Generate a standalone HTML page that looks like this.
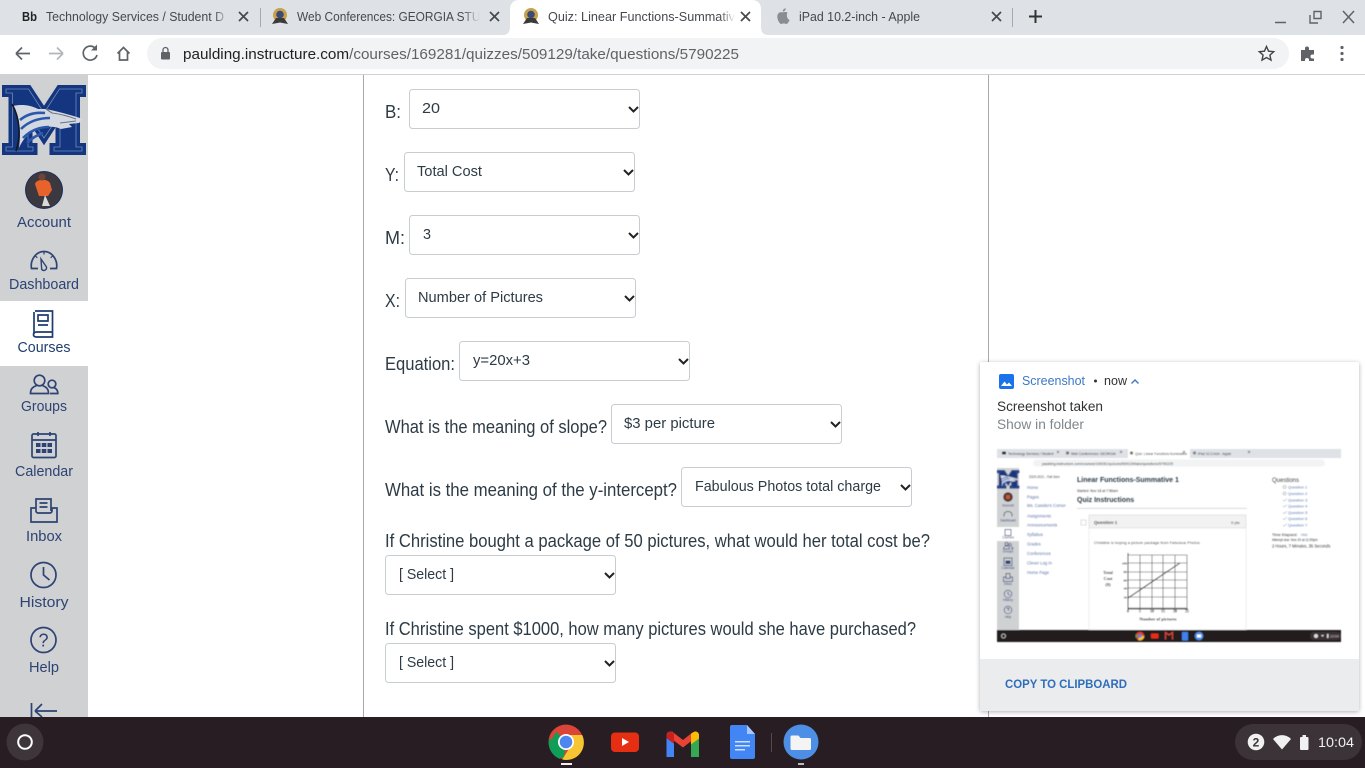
<!DOCTYPE html>
<html lang="en">
<head>
<meta charset="utf-8">
<title>Quiz: Linear Functions-Summative 1</title>
<style>
html,body{margin:0;padding:0;width:1365px;height:768px;overflow:hidden;background:#fff}
svg{display:block;position:absolute;left:0;top:0}
text{font-family:"Liberation Sans",sans-serif}
.q{font-size:18px;fill:#2d3b45}
.s{font-size:15px;fill:#2d3b45}
.n{font-size:15px;fill:#2d4373;text-anchor:middle}
.t{font-size:12.5px;fill:#45494e}
.box{fill:#fff;stroke:#c7cdd1;stroke-width:1}
.chev{fill:none;stroke:#222;stroke-width:2}
.ic{fill:none;stroke:#2d4373;stroke-width:1.7}
.x{fill:none;stroke:#45494e;stroke-width:1.7}
.tb{fill:none;stroke:#5f6368;stroke-width:1.7}
.mi{fill:none;stroke:#2d4373;stroke-width:.7}
.ml{font-size:3.2px;fill:#2d4373;text-anchor:middle}
.sf{font-family:"Liberation Serif",serif;font-weight:bold;fill:#222}
</style>
</head>
<body>
<svg width="1365" height="768" viewBox="0 0 1365 768" xmlns="http://www.w3.org/2000/svg">
<defs>
<linearGradient id="fg" x1="0" x2="1" y1="0" y2="0"><stop offset="0" stop-color="#dee1e6" stop-opacity="0"/><stop offset="1" stop-color="#dee1e6"/></linearGradient>
<linearGradient id="fw" x1="0" x2="1" y1="0" y2="0"><stop offset="0" stop-color="#fff" stop-opacity="0"/><stop offset="1" stop-color="#fff"/></linearGradient>
<filter id="sh" x="-10%" y="-10%" width="120%" height="120%"><feDropShadow dx="0" dy="1" stdDeviation="2.5" flood-color="#000" flood-opacity=".3"/></filter>
<filter id="bl"><feGaussianBlur stdDeviation=".4"/></filter>
<clipPath id="cc"><circle cx="44" cy="190" r="18"/></clipPath>
</defs>

<!-- browser chrome -->
<rect width="1365" height="35" fill="#dee1e6"/>
<rect y="35" width="1365" height="39" fill="#fff"/>
<rect y="74" width="1365" height="1" fill="#d0d1d3"/>
<path d="M502 35c6 0 8-3 8-8V9c0-5 3-9 9-9h233c6 0 9 4 9 9v18c0 5 2 8 8 8z" fill="#fff"/>

<!-- tab 1 -->
<text x="22" y="21" style="font-size:13px;font-weight:bold" fill="#222" textLength="15" lengthAdjust="spacingAndGlyphs">Bb</text>
<text x="46" y="21" class="t" textLength="178" lengthAdjust="spacingAndGlyphs">Technology Services / Student D</text>
<rect x="214" y="6" width="15" height="24" fill="url(#fg)"/><rect x="229" y="6" width="24" height="24" fill="#dee1e6"/>
<path class="x" d="M239 12l9 9M248 12l-9 9"/>
<rect x="260" y="8" width="1" height="19" fill="#a4a7ab"/>
<!-- tab 2 -->
<g id="seal"><circle cx="280" cy="15" r="7" fill="#c8a24a"/><circle cx="280" cy="14.5" r="3.8" fill="#3c4a78"/><path d="M272 24l4-6h8l4 6-8-1.500z" fill="#3a3a3a"/></g>
<text x="297" y="21" class="t" textLength="192" lengthAdjust="spacingAndGlyphs">Web Conferences: GEORGIA STUD</text>
<rect x="462" y="6" width="18" height="24" fill="url(#fg)"/><rect x="480" y="6" width="24" height="24" fill="#dee1e6"/>
<path class="x" d="M490 12l9 9M499 12l-9 9"/>
<!-- tab 3 -->
<use href="#seal" x="251"/>
<text x="548" y="21" class="t" textLength="187" lengthAdjust="spacingAndGlyphs">Quiz: Linear Functions-Summativ</text>
<rect x="720" y="6" width="15" height="24" fill="url(#fw)"/><rect x="735" y="6" width="21" height="24" fill="#fff"/>
<path class="x" d="M741 12l9 9M750 12l-9 9"/>
<!-- tab 4 -->
<g transform="translate(3.500 2)"><path d="M784 10.500c-1.500-.8-3.800-.6-4.800 0-2.200-1.200-5.400.4-5.400 4.100 0 3.500 2.400 7.400 4.100 7.400.9 0 1.200-.6 2.400-.6s1.500.6 2.400.6c1.300 0 2.800-2.200 3.300-4-2.800-1.100-3.200-5.600-2-7.500zM779.200 9.500c0-1.800 1.300-3 3-3.300.2 1.800-1.300 3.300-3 3.300z" fill="#8a8d91"/></g>
<text x="799" y="21" class="t" textLength="121" lengthAdjust="spacingAndGlyphs">iPad 10.2-inch - Apple</text>
<path class="x" d="M992 12l9 9M1001 12l-9 9"/>
<rect x="1012" y="8" width="1" height="19" fill="#a4a7ab"/>
<path d="M1035.500 10v13M1029 16.500h13" fill="none" stroke="#333" stroke-width="2"/>
<!-- window controls -->
<path d="M1275 22.500h11" stroke="#5f6368" stroke-width="1.500"/>
<path d="M1310 15v8h8M1314 11.500h7v7h-7z" fill="none" stroke="#5f6368" stroke-width="1.400"/>
<path d="M1343 11l11 12M1354 11l-11 12" fill="none" stroke="#5f6368" stroke-width="1.500"/>

<!-- toolbar -->
<path d="M16 53.500h14M16 53.500l6-6M16 53.500l6 6" class="tb"/>
<path d="M63 53.500H49M63 53.500l-6-6M63 53.500l-6 6" fill="none" stroke="#b4b6b9" stroke-width="1.700"/>
<path d="M95.500 48.500a7 7 0 1 0 1.500 6.500" class="tb"/><path d="M97 44.500v6h-6z" fill="#5f6368"/>
<path d="M117.500 53.500l6-6 6 6M119.500 52v8h8v-8" class="tb"/>
<rect x="147" y="38" width="1142" height="31" rx="15.500" fill="#f1f3f4"/>
<rect x="161" y="52" width="9" height="7.500" rx="1" fill="#5f6368"/><path d="M163 52v-2a2.500 2.500 0 0 1 5 0v2" fill="none" stroke="#5f6368" stroke-width="1.300"/>
<text x="183" y="59" style="font-size:14.500px" textLength="556" lengthAdjust="spacingAndGlyphs"><tspan fill="#202124">paulding.instructure.com</tspan><tspan fill="#5f6368">/courses/169281/quizzes/509129/take/questions/5790225</tspan></text>
<path d="M1266.500 46.500l2.100 4.700 5.100.5-3.800 3.400 1.100 5-4.500-2.600-4.500 2.600 1.100-5-3.800-3.400 5.100-.5z" fill="none" stroke="#444" stroke-width="1.400"/>
<path d="M1301 50h4v-1.500a2 2 0 0 1 4 0V50h5v4.500h-1.500a2 2 0 0 0 0 4h1.500V61h-5v-1a2 2 0 0 0-4 0v1h-4z" fill="#5f6368"/>
<circle cx="1342" cy="47.500" r="1.600" fill="#5f6368"/><circle cx="1342" cy="53.500" r="1.600" fill="#5f6368"/><circle cx="1342" cy="59.500" r="1.600" fill="#5f6368"/>

<!-- sidebar -->
<rect y="75" width="88" height="642" fill="#cfd1d3"/>
<rect y="301" width="88" height="65" fill="#fff"/>

<!-- logo -->
<g id="logo">
<path d="M3.500 86.500h26l14.500 22 14.500-22h26v9h-6v49h6v9H51v-9h6v-22l-13 20-13-20v22h5v9H3.500v-9h6.500v-49H3.500z" fill="#14357f" stroke="#14357f" stroke-width="3"/>
<path d="M6 89h22.500l15.500 24 15.500-24H82v4h-6v54h6v4H54v-4h6v-33l-16 24-16-24v33h5v4H6v-4h6.500V93H6z" fill="#14357f" stroke="#6f8bb8" stroke-width=".8"/>
<path d="M13 106c9-2 17-1 25 3l8 0c10 2 25 6 37 10l-4 4-10 1 3 3-11 2c-9-4-20-3-29 3-6 4-10 9-13 16 2-14 1-30-6-42z" fill="#d3d8e1"/>
<path d="M12 104c8 14 9 32 4 47" fill="none" stroke="#15171f" stroke-width="1.600"/>
<path d="M21 129c8-8 18-11 29-11M23 138c7-7 16-11 26-11M20 120c7-6 15-8 25-7M27 143c5-5 10-8 16-10" fill="none" stroke="#2a58ad" stroke-width="2.600"/>
<path d="M52 113c8 1 16 3 24 6M60 123l16-2M46 109l6 4" fill="none" stroke="#6b7484" stroke-width="1.100"/>
</g>

<!-- avatar -->
<circle cx="44" cy="190" r="19" fill="#1c2f5c"/>
<g clip-path="url(#cc)"><rect x="25" y="171" width="38" height="38" fill="#3c3840"/><path d="M35 184c1-5 12-6 15-1l2 7-4 6h-9z" fill="#e8622c"/><circle cx="42" cy="177" r="3.500" fill="#6e4438"/><path d="M45 195l5 11h-8z" fill="#d9d9d9"/></g>

<!-- nav icons -->
<path class="ic" d="M38 268.500h-6.500c-1.500-8 4-17 12.500-17s14 9 12.500 17H50"/>
<path class="ic" style="stroke-width:1.400" d="M41 259l5.500 8a2.800 2.800 0 0 1-4.800 2.500z"/>
<path d="M44 252v2.500M35.500 256l1.800 1.800M52.500 256l-1.800 1.800" stroke="#2d4373" stroke-width="1.200"/>
<path class="ic" d="M35 311h17.500v21H36.500c-2 0-3 1-3 2.500s1 2.500 3 2.500h16v-5M34 334V312" style="stroke:#1f3d70"/><path class="ic" d="M38 315h10v6H38zM38 325h10" style="stroke:#1f3d70"/>
<circle class="ic" cx="39.500" cy="380.500" r="5.300"/>
<path class="ic" d="M36.500 385.500c-3.500 1.500-6 3-6 8h18c0-5-2.500-6.500-6-8"/>
<circle class="ic" cx="52" cy="384" r="3.800"/>
<path class="ic" d="M50 393.500h7.800c0-4-2-5-4-6"/>
<rect class="ic" x="32" y="434" width="24" height="23.500" rx="1.500"/><path class="ic" d="M32 440h24M38 432v4M50 432v4"/>
<path d="M36 443h4.500v4H36zM41.800 443h4.500v4h-4.500zM47.500 443h4.500v4h-4.500zM36 449h4.500v4H36zM41.800 449h4.500v4h-4.500zM47.500 449h4.500v4h-4.500z" fill="#2d4373"/>
<path class="ic" d="M36 511v-12h15v12M39.500 503h8M39.500 507h8M31 508h5v3a2 2 0 0 0 2 2h12a2 2 0 0 0 2-2v-3h5v14H31z"/>
<circle class="ic" cx="43.500" cy="575" r="12.500"/><path class="ic" d="M43.500 567v8l6 5"/>
<circle class="ic" cx="43.500" cy="640" r="12.500"/>
<text x="43.500" y="646.500" style="font-size:18px;fill:#2d4373;text-anchor:middle">?</text>
<path class="ic" d="M31.500 703v14M57 711H35M35 711l7-7M35 711l7 6"/>

<text class="n" x="44" y="227" textLength="54" lengthAdjust="spacingAndGlyphs">Account</text>
<text class="n" x="44" y="289" textLength="70" lengthAdjust="spacingAndGlyphs">Dashboard</text>
<text class="n" x="44" y="352" textLength="53" lengthAdjust="spacingAndGlyphs" style="fill:#1f3d70">Courses</text>
<text class="n" x="44" y="411" textLength="46" lengthAdjust="spacingAndGlyphs">Groups</text>
<text class="n" x="44" y="476" textLength="58" lengthAdjust="spacingAndGlyphs">Calendar</text>
<text class="n" x="44" y="541" textLength="36" lengthAdjust="spacingAndGlyphs">Inbox</text>
<text class="n" x="44" y="607" textLength="49" lengthAdjust="spacingAndGlyphs">History</text>
<text class="n" x="44" y="672" textLength="30" lengthAdjust="spacingAndGlyphs">Help</text>

<!-- content borders -->
<rect x="363" y="75" width="1" height="642" fill="#a8a8a8"/>
<rect x="988" y="75" width="1" height="642" fill="#a8a8a8"/>

<!-- form -->
<text class="q" x="385" y="118" textLength="16" lengthAdjust="spacingAndGlyphs">B:</text>
<rect class="box" x="409.500" y="89.500" width="230" height="39" rx="3"/>
<text class="s" x="422" y="113" textLength="18" lengthAdjust="spacingAndGlyphs">20</text>
<path class="chev" d="M629 107l4.500 4.500 4.500-4.500"/>

<text class="q" x="385" y="181" textLength="14" lengthAdjust="spacingAndGlyphs">Y:</text>
<rect class="box" x="404.500" y="152.500" width="230" height="39" rx="3"/>
<text class="s" x="417" y="176" textLength="65" lengthAdjust="spacingAndGlyphs">Total Cost</text>
<path class="chev" d="M624 170l4.500 4.500 4.500-4.500"/>

<text class="q" x="385" y="244" textLength="20" lengthAdjust="spacingAndGlyphs">M:</text>
<rect class="box" x="409.500" y="215.500" width="230" height="39" rx="3"/>
<text class="s" x="423" y="239" textLength="8" lengthAdjust="spacingAndGlyphs">3</text>
<path class="chev" d="M629 233l4.500 4.500 4.500-4.500"/>

<text class="q" x="385" y="307" textLength="15" lengthAdjust="spacingAndGlyphs">X:</text>
<rect class="box" x="405.500" y="278.500" width="230" height="39" rx="3"/>
<text class="s" x="418" y="302" textLength="125" lengthAdjust="spacingAndGlyphs">Number of Pictures</text>
<path class="chev" d="M625 296l4.500 4.500 4.500-4.500"/>

<text class="q" x="385" y="370" textLength="70" lengthAdjust="spacingAndGlyphs">Equation:</text>
<rect class="box" x="459.500" y="341.500" width="230" height="39" rx="3"/>
<text class="s" x="473" y="365" textLength="57" lengthAdjust="spacingAndGlyphs">y=20x+3</text>
<path class="chev" d="M679 359l4.500 4.500 4.500-4.500"/>

<text class="q" x="385" y="433" textLength="222" lengthAdjust="spacingAndGlyphs">What is the meaning of slope?</text>
<rect class="box" x="611.500" y="404.500" width="230" height="39" rx="3"/>
<text class="s" x="624" y="428" textLength="91" lengthAdjust="spacingAndGlyphs">$3 per picture</text>
<path class="chev" d="M831 422l4.500 4.500 4.500-4.500"/>

<text class="q" x="385" y="496" textLength="292" lengthAdjust="spacingAndGlyphs">What is the meaning of the y-intercept?</text>
<rect class="box" x="681.500" y="467.500" width="230" height="39" rx="3"/>
<text class="s" x="695" y="491" textLength="186" lengthAdjust="spacingAndGlyphs">Fabulous Photos total charge</text>
<path class="chev" d="M901 485l4.500 4.500 4.500-4.500"/>

<text class="q" x="385" y="547" textLength="545" lengthAdjust="spacingAndGlyphs">If Christine bought a package of 50 pictures, what would her total cost be?</text>
<rect class="box" x="385.500" y="555.500" width="230" height="39" rx="3"/>
<text class="s" x="399" y="579" textLength="55" lengthAdjust="spacingAndGlyphs">[ Select ]</text>
<path class="chev" d="M605 573l4.500 4.500 4.500-4.500"/>

<text class="q" x="385" y="635" textLength="531" lengthAdjust="spacingAndGlyphs">If Christine spent $1000, how many pictures would she have purchased?</text>
<rect class="box" x="385.500" y="643.500" width="230" height="39" rx="3"/>
<text class="s" x="399" y="667" textLength="55" lengthAdjust="spacingAndGlyphs">[ Select ]</text>
<path class="chev" d="M605 661l4.500 4.500 4.500-4.500"/>

<!-- notification -->
<rect x="980" y="362" width="379" height="349" rx="2" fill="#fff" filter="url(#sh)"/>
<rect x="980" y="659" width="379" height="52" fill="#ebecee"/>
<rect x="999" y="374" width="15" height="15" rx="2" fill="#1a73e8"/>
<path d="M1001 386l3.500-4.500 2.500 3 2-2 3 3.500z" fill="#fff"/>
<text x="1022" y="385" style="font-size:12.500px" fill="#3c78c8" textLength="63" lengthAdjust="spacingAndGlyphs">Screenshot</text>
<circle cx="1095.500" cy="381" r="1.500" fill="#333"/>
<text x="1104" y="385" style="font-size:12.500px" fill="#333" textLength="23" lengthAdjust="spacingAndGlyphs">now</text>
<path d="M1131.500 383.500l3.500-3.500 3.500 3.500" fill="none" stroke="#3c78c8" stroke-width="1.400"/>
<text x="997" y="411" style="font-size:13.500px" fill="#333" textLength="106" lengthAdjust="spacingAndGlyphs">Screenshot taken</text>
<text x="997" y="429" style="font-size:13.500px" fill="#80868b" textLength="87" lengthAdjust="spacingAndGlyphs">Show in folder</text>
<text x="1005" y="688" style="font-size:12px;font-weight:bold" fill="#2f6dbb" textLength="122" lengthAdjust="spacingAndGlyphs">COPY TO CLIPBOARD</text>

<!-- thumbnail -->
<g>
<rect x="997" y="449" width="344" height="193" fill="#fff"/>
<g filter="url(#bl)">
<rect x="997" y="449" width="344" height="9" fill="#dee1e6"/>
<rect x="1128" y="449" width="62" height="9" fill="#fff"/>
<rect x="1002" y="451.500" width="4" height="3" fill="#333"/>
<rect x="1066" y="451.500" width="3" height="3" fill="#776"/>
<rect x="1130" y="451.500" width="3" height="3" fill="#776"/>
<rect x="1193" y="451.500" width="3" height="3" fill="#888"/>
<text x="1008" y="455" style="font-size:3.400px" fill="#333">Technology Services / Student</text>
<text x="1071" y="455" style="font-size:3.400px" fill="#333">Web Conferences: GEORGIA</text>
<text x="1135" y="455" style="font-size:3.400px" fill="#333">Quiz: Linear Functions-Summative</text>
<text x="1198" y="455" style="font-size:3.400px" fill="#333">iPad 10.2-inch - Apple</text>
<path d="M1057 451l2 2M1059 451l-2 2M1120 451l2 2M1122 451l-2 2M1183 451l2 2M1185 451l-2 2M1248 451l2 2M1250 451l-2 2" stroke="#444" stroke-width=".6"/>
<rect x="1033" y="459.500" width="292" height="7" rx="3.500" fill="#f1f3f4"/>
<text x="1042" y="465" style="font-size:3.600px" fill="#333">paulding.instructure.com/courses/169281/quizzes/509129/take/questions/5790225</text>
<rect x="997" y="468" width="22" height="162" fill="#cfd1d3"/>
<rect x="997" y="527" width="22" height="14" fill="#fff"/>
<g transform="translate(996.500 447.500) scale(.265)"><use href="#logo"/></g>
<circle cx="1008" cy="497" r="4.800" fill="#4e3438"/><path d="M1006 495h4v4h-4z" fill="#c9562c"/>
<path class="mi" d="M1004 516.500c-.5-3 1-5 4-5s4.500 2 4 5"/>
<path class="mi" d="M1005 529.500h6v6h-6z"/>
<circle class="mi" cx="1006.500" cy="544" r="1.500"/><path class="mi" d="M1003.500 549c0-2 1.500-3 3-3s3 1 3 3zM1010 543.500a1.300 1.300 0 1 0 .1 0M1011 549h2c0-1.500-1-2-2-2"/>
<rect class="mi" x="1004" y="558" width="8" height="7.500"/><path d="M1005.500 560.500h5v3.500h-5z" fill="#2d4373"/>
<path class="mi" d="M1003.500 577h2.500v1.500h4V577h2.500v4.500h-9zM1006 577v-3.500h4v3.500"/>
<circle class="mi" cx="1008" cy="594" r="3.800"/><path class="mi" d="M1008 591.500v2.500l2 1.500"/>
<circle class="mi" cx="1008" cy="610" r="3.800"/><path class="mi" d="M1007 609c0-1.500 2-1.500 2 0 0 1-1 1-1 2"/>
<text class="ml" x="1008" y="506.500">Account</text>
<text class="ml" x="1008" y="521.500">Dashboard</text>
<text class="ml" x="1008" y="538.500">Courses</text>
<text class="ml" x="1008" y="552.500">Groups</text>
<text class="ml" x="1008" y="569">Calendar</text>
<text class="ml" x="1008" y="585">Inbox</text>
<text class="ml" x="1008" y="601">History</text>
<text class="ml" x="1008" y="618">Help</text>
<g style="font-size:4.200px" fill="#5e74a8">
<text x="1027" y="489">Home</text><text x="1027" y="498.500">Pages</text><text x="1027" y="507">Ms. Cassito's Corner</text><text x="1027" y="517.500">Assignments</text><text x="1027" y="526.500">Announcements</text><text x="1027" y="536">Syllabus</text><text x="1027" y="545.500">Grades</text><text x="1027" y="555">Conferences</text><text x="1027" y="564.500">Clever Log In</text><text x="1027" y="574">Home Page</text>
</g>
<text x="1029" y="478" style="font-size:3.200px" fill="#444">2020-2021 - Fall Sem</text>
<text x="1077" y="482" style="font-size:7px;font-weight:bold" fill="#2d3b45">Linear Functions-Summative 1</text>
<text x="1077" y="492" style="font-size:3.500px" fill="#333">Started: Nov 18 at 7:56am</text>
<text x="1077" y="502" style="font-size:7px;font-weight:bold" fill="#2d3b45">Quiz Instructions</text>
<rect x="1077" y="508" width="170" height=".7" fill="#c7cdd1"/>
<rect x="1081" y="520" width="5" height="5" fill="#fff" stroke="#b8bcc0" stroke-width=".5"/>
<rect x="1089" y="515" width="157" height="13" fill="#f2f2f2" stroke="#d0d0d0" stroke-width=".5"/>
<rect x="1089" y="528" width="157" height="102" fill="#fff" stroke="#dcdcdc" stroke-width=".5"/>
<text x="1094" y="524" style="font-size:4.500px;font-weight:bold" fill="#333">Question 1</text>
<text x="1231" y="524" style="font-size:4px" fill="#333">9 pts</text>
<text x="1094" y="544" style="font-size:4px" fill="#333">Christine is buying a picture package from Fabulous Photos.</text>
<g fill="none" stroke="#444" stroke-width=".6"><path d="M1128 555h59v53h-59zM1140 555v53M1152 555v53M1163 555v53M1175 555v53M1128 563h59M1128 572h59M1128 580h59M1128 588h59M1128 597h59"/></g>
<path d="M1128 598l52-35" stroke="#222" stroke-width="1" fill="none"/>
<path d="M1128 553v56h60" stroke="#111" stroke-width="1" fill="none"/>
<g class="sf">
<text class="sf" x="1108" y="574" style="font-size:4.500px;text-anchor:middle">Total</text>
<text class="sf" x="1108" y="580" style="font-size:4.500px;text-anchor:middle">Cost</text>
<text class="sf" x="1108" y="586" style="font-size:4.500px;text-anchor:middle">($)</text>
<text class="sf" x="1158" y="620.500" style="font-size:4.500px;text-anchor:middle">Number of pictures</text>
<text class="sf" x="1128" y="612.500" style="font-size:3.800px;text-anchor:middle">0</text><text class="sf" x="1140" y="612.500" style="font-size:3.800px;text-anchor:middle">5</text><text class="sf" x="1152" y="612.500" style="font-size:3.800px;text-anchor:middle">10</text><text class="sf" x="1163" y="612.500" style="font-size:3.800px;text-anchor:middle">15</text><text class="sf" x="1175" y="612.500" style="font-size:3.800px;text-anchor:middle">20</text><text class="sf" x="1187" y="612.500" style="font-size:3.800px;text-anchor:middle">25</text>
<text class="sf" x="1127" y="564.500" style="font-size:3.500px;text-anchor:end">100</text><text class="sf" x="1127" y="573" style="font-size:3.500px;text-anchor:end">80</text><text class="sf" x="1127" y="581.500" style="font-size:3.500px;text-anchor:end">60</text><text class="sf" x="1127" y="589.500" style="font-size:3.500px;text-anchor:end">40</text><text class="sf" x="1127" y="598.500" style="font-size:3.500px;text-anchor:end">20</text>
</g>
<text x="1272" y="482" style="font-size:6px" fill="#444">Questions</text>
<g style="font-size:4px" fill="#5a78b8">
<text x="1288" y="488.500">Question 1</text><text x="1288" y="495">Question 2</text><text x="1288" y="501.500">Question 3</text><text x="1288" y="507.500">Question 4</text><text x="1288" y="514">Question 5</text><text x="1288" y="520">Question 6</text><text x="1288" y="526.500">Question 7</text>
</g>
<circle cx="1284.500" cy="487" r="1.500" fill="none" stroke="#888" stroke-width=".5"/><circle cx="1284.500" cy="493.500" r="1.500" fill="none" stroke="#888" stroke-width=".5"/>
<path d="M1283 500l1.200 1.200 2.500-2.500M1283 506l1.200 1.200 2.500-2.500M1283 512.500l1.200 1.200 2.500-2.500M1283 518.500l1.200 1.200 2.500-2.500M1283 525l1.200 1.200 2.500-2.500" fill="none" stroke="#7a8a9a" stroke-width=".5"/>
<text x="1272" y="536" style="font-size:4px" fill="#333">Time Elapsed:</text>
<text x="1301" y="536" style="font-size:3.200px" fill="#6a7fb0">Hide</text>
<text x="1272" y="541" style="font-size:3.200px" fill="#333">Attempt due: Nov 20 at 11:59pm</text>
<text x="1272" y="547.500" style="font-size:4.100px" fill="#333">2 Hours, 7 Minutes, 35 Seconds</text>
<rect x="997" y="630" width="344" height="12" fill="#231a1f"/>
<circle cx="1003.500" cy="636" r="2" fill="none" stroke="#ccc" stroke-width=".8"/>
<circle cx="1140" cy="636" r="4.300" fill="#dc4437"/><path d="M1140 636l4.300 0a4.300 4.300 0 0 1-6.500 3.700z" fill="#f5c33b"/><path d="M1136 638a4.300 4.300 0 0 1 0-4l2 2z" fill="#34a853"/><circle cx="1140" cy="636" r="1.600" fill="#4285f4"/>
<rect x="1151" y="633.500" width="7.500" height="5" rx="1" fill="#e62d12"/>
<path d="M1165.500 639.500v-7l3.500 2.500 3.500-2.500v7" fill="none" stroke="#dd4437" stroke-width="1.300"/>
<rect x="1182" y="632" width="6" height="8.500" rx=".6" fill="#3f80f0"/>
<circle cx="1199" cy="636" r="4.300" fill="#4e8fe6"/><rect x="1197" y="634.500" width="4.200" height="3" fill="#fff"/>
<rect x="1310" y="632" width="31" height="8" rx="4" fill="#3a3135"/>
<circle cx="1316" cy="636" r="2" fill="#ddd"/><path d="M1321 635h3l-1.500 2z" fill="#ddd"/><rect x="1327" y="634" width="1.500" height="4" fill="#ddd"/>
<text x="1330" y="637.500" style="font-size:3.500px" fill="#ccc">10:04</text>
</g>
</g>

<!-- shelf -->
<rect y="717" width="1365" height="51" fill="#271d22"/>
<circle cx="25" cy="742" r="18.500" fill="#3d3539"/>
<circle cx="25" cy="742" r="6.800" fill="none" stroke="#fff" stroke-width="2"/>

<!-- chrome icon -->
<circle cx="566" cy="742" r="17.500" fill="#db4437"/>
<path d="M566 742l-9.500-10a17.500 17.500 0 0 0-.5 24.500l8 1.500z" fill="#0f9d58"/>
<path d="M549 739a17.500 17.500 0 0 0 11 20l6-17z" fill="#0f9d58"/>
<path d="M566 735h16.200a17.500 17.500 0 0 1-20 24.500l7-11z" fill="#f7c531"/>
<circle cx="566" cy="742" r="8" fill="#fff"/><circle cx="566" cy="742" r="6.300" fill="#4d86ee"/>
<rect x="561" y="763" width="11" height="2" fill="#eee"/>
<!-- youtube -->
<rect x="611" y="732.500" width="28" height="19.500" rx="4" fill="#e62e12"/>
<path d="M622 738l7 4-7 4z" fill="#fff"/>
<!-- gmail -->
<path d="M666.500 757v-22a3.500 3.500 0 0 1 5.500-2.800l2 1.500V757z" fill="#4285f4"/>
<path d="M691 757v-23.300l2.500-1.500a3.500 3.500 0 0 1 5.500 2.800V757z" fill="#34a853"/>
<path d="M666.500 735l16.500 12.500L699 735v-1l-6-2-10 8-11-8.500-4 1z" fill="#ea4335"/>
<path d="M691 733.700l2.500-1.500a3.500 3.500 0 0 1 5.500 2.800v3.500l-8 6z" fill="#fbbc04"/>
<path d="M666.500 735a3.500 3.500 0 0 1 5.500-2.800l2 1.500v10l-7.500-5.500z" fill="#c5221f"/>
<!-- docs -->
<path d="M732 725h15l8 9v23a2 2 0 0 1-2 2h-21a2 2 0 0 1-2-2v-30a2 2 0 0 1 2-2z" fill="#4285f4"/>
<path d="M747 725l8 9h-8z" fill="#a8c7fa"/>
<path d="M735 741h15v1.500h-15zM735 745h15v1.500h-15zM735 749h10v1.500h-10z" fill="#cfe0fc"/>
<rect x="771" y="733" width="1" height="19" fill="#55494e"/>
<!-- files -->
<circle cx="801" cy="742" r="17.500" fill="#4e8fe6"/>
<path d="M792 735.500h6.500l2 2.500h9a1.500 1.500 0 0 1 1.500 1.500v9a1.500 1.500 0 0 1-1.500 1.500h-17.500a1.500 1.500 0 0 1-1.500-1.500V737a1.500 1.500 0 0 1 1.500-1.500z" fill="#f4f4f4"/>
<rect x="798" y="763" width="6" height="2" fill="#bbb"/>

<!-- status -->
<rect x="1235" y="724" width="127" height="36" rx="18" fill="#3b3337"/>
<circle cx="1256" cy="742" r="8.300" fill="#f1f1f1"/>
<text x="1256" y="746.500" style="font-size:12px;font-weight:bold;text-anchor:middle" fill="#3b3337">2</text>
<path d="M1273 739a12.500 12.500 0 0 1 18 0l-9 10.500z" fill="#f1f1f1"/>
<rect x="1300" y="737" width="8.500" height="13" rx="1" fill="#f1f1f1"/><rect x="1302.500" y="735" width="3.500" height="2.500" fill="#f1f1f1"/>
<text x="1318" y="747" style="font-size:14px" fill="#f1f1f1" textLength="36" lengthAdjust="spacingAndGlyphs">10:04</text>
</svg>
</body>
</html>
